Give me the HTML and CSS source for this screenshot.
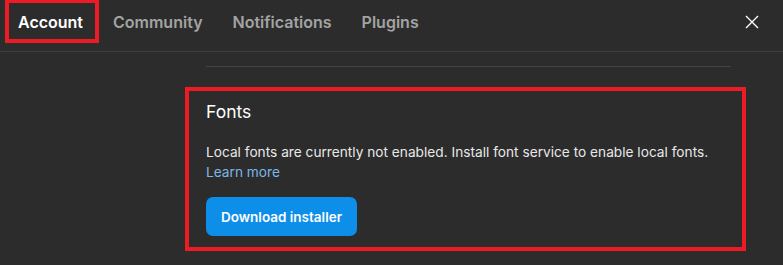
FILE: index.html
```html
<!DOCTYPE html>
<html>
<head>
    <title>Settings</title>
    <link rel="stylesheet" href="styles.css">
</head>
<body>
    <div class="settings">
        <header class="tabs">
            <span class="tab tab-active marked">Account</span>
            <span class="tab">Community</span>
            <span class="tab">Notifications</span>
            <span class="tab">Plugins</span>
            <button class="close-button" aria-label="Close">
                <svg width="14" height="14" viewBox="0 0 14 14">
                    <path d="M1 1 L13 13 M13 1 L1 13" stroke="#ffffff" stroke-width="1.4" fill="none"/>
                </svg>
            </button>
        </header>

        <div class="content">
            <div class="rule"></div>

            <section class="fonts-section marked-box">
                <h2 class="section-title">Fonts</h2>
                <p class="section-text">
                    Local fonts are currently not enabled. Install font service to enable local fonts.<br>
                    <a href="#" class="link">Learn more</a>
                </p>
                <button class="primary-button">Download installer</button>
            </section>
        </div>
    </div>
</body>
</html>
```

FILE: styles.css
```css
body {
    margin: 0;
    background-color: #2c2c2c;
    font-family: Inter, "Noto Sans", sans-serif;
    color: #ffffff;
}

.settings {
    width: 783px;
    height: 265px;
    overflow: hidden;
}

.tabs {
    display: flex;
    align-items: center;
    gap: 30px;
    height: 52px;
    box-sizing: border-box;
    padding: 0 0 8px 18px;
    border-bottom: 1px solid #3e3e3e;
}

.tab {
    position: relative;
    font-size: 16px;
    font-weight: 600;
    color: #a3a3a3;
}

.tab-active {
    color: #ffffff;
}

/* red annotation frames drawn over the screenshot */
.marked::after {
    content: "";
    position: absolute;
    left: -13px;
    right: -16px;
    top: -13px;
    bottom: -11px;
    border: 4px solid #ed1c24;
}

.close-button {
    margin-left: auto;
    margin-right: 24px;
    padding: 0;
    border: none;
    background: none;
    display: flex;
}

.content {
    width: 525px;
    margin-left: 206px;
}

.rule {
    margin-top: 14px;
    height: 1px;
    background-color: #444444;
}

.fonts-section {
    position: relative;
    margin-top: 33px;
}

.marked-box::after {
    content: "";
    position: absolute;
    left: -21px;
    right: -15px;
    top: -13px;
    bottom: -15px;
    border: 4px solid #ed1c24;
}

.section-title {
    margin: 0 0 18px 0;
    font-size: 17.5px;
    font-weight: 400;
    line-height: 24px;
}

.section-text {
    margin: 0 0 15px 0;
    font-size: 13.7px;
    line-height: 20px;
    color: #e8e8e8;
}

.link {
    color: #7cb6e6;
    text-decoration: none;
}

.primary-button {
    display: block;
    height: 39px;
    padding: 0 15px;
    border: none;
    border-radius: 7px;
    background-color: #0d8ee9;
    color: #ffffff;
    font-family: Inter, "Noto Sans", sans-serif;
    font-size: 13.5px;
    font-weight: 600;
}
```
